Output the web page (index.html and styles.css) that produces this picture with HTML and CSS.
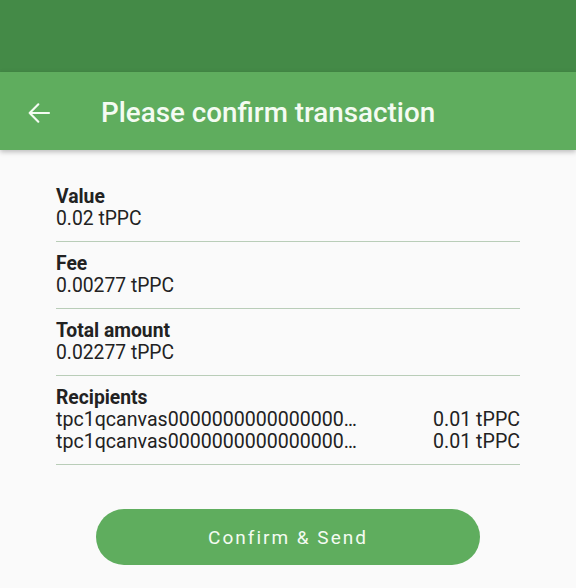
FILE: index.html
```html
<!DOCTYPE html>
<html lang="en">
<head>
  <meta charset="UTF-8" />
  <title>Please confirm transaction</title>
  <link rel="stylesheet" href="styles.css">
</head>
<body>
  <div class="status-bar"></div>

  <header class="app-bar">
    <button class="back" aria-label="Back">
      <svg width="32" height="32" viewBox="0 0 24 24">
        <path d="M19.5 12H5M11.5 5.5L5 12l6.5 6.5" fill="none" stroke="currentColor" stroke-width="1.6" stroke-linecap="round" stroke-linejoin="round"/>
      </svg>
    </button>
    <h1>Please confirm transaction</h1>
  </header>

  <main class="content">
    <div class="row">
      <div class="label">Value</div>
      <div>0.02 tPPC</div>
    </div>
    <div class="row">
      <div class="label">Fee</div>
      <div>0.00277 tPPC</div>
    </div>
    <div class="row">
      <div class="label">Total amount</div>
      <div>0.02277 tPPC</div>
    </div>
    <div class="row">
      <div class="label">Recipients</div>
      <div class="recipient">
        <span>tpc1qcanvas0000000000000000…</span>
        <span>0.01 tPPC</span>
      </div>
      <div class="recipient">
        <span>tpc1qcanvas0000000000000000…</span>
        <span>0.01 tPPC</span>
      </div>
    </div>

    <button class="confirm">Confirm &amp; Send</button>
  </main>
</body>
</html>
```

FILE: styles.css
```css
body {
  margin: 0;
  font-family: Roboto, "Liberation Sans", sans-serif;
  background: #fafafa;
  color: #222;
  width: 576px;
  height: 588px;
  overflow: hidden;
}
.status-bar {
  height: 72px;
  background: #448a47;
}
.app-bar {
  height: 78px;
  background: #5fad5e;
  display: flex;
  align-items: center;
  color: #f4fbf2;
  box-shadow: 0 2px 5px rgba(0, 0, 0, 0.25);
  position: relative;
}
.back {
  width: 56px;
  height: 56px;
  margin: 4px 34px 0 11px;
  background: none;
  border: none;
  padding: 0;
  color: inherit;
  display: flex;
  align-items: center;
  justify-content: center;
}
.app-bar h1 {
  margin: 2px 0 0;
  font-size: 27.8px;
  font-weight: 500;
  letter-spacing: 0;
}
.content {
  padding: 25px 56px 0;
  font-size: 19.3px;
  line-height: 22px;
}
.row {
  padding: 11px 0;
  border-bottom: 1px solid #b9cdb8;
}
.label {
  font-weight: 700;
}
.recipient {
  display: flex;
  justify-content: space-between;
  font-size: 19.6px;
}
.confirm {
  display: block;
  width: 384px;
  height: 56px;
  margin: 44px auto 0;
  border: none;
  border-radius: 28px;
  background: #5fad5e;
  color: #f4fbf2;
  font-family: inherit;
  font-size: 19px;
  letter-spacing: 2px;
}
```
